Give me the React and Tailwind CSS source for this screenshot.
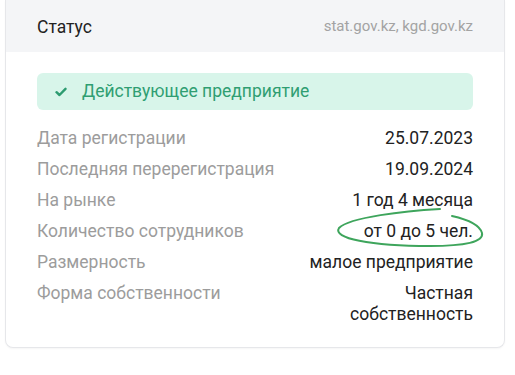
import React from "react";

const rows = [
  ["Дата регистрации", "25.07.2023"],
  ["Последняя перерегистрация", "19.09.2024"],
  ["На рынке", "1 год 4 месяца"],
  ["Количество сотрудников", "от 0 до 5 чел."],
  ["Размерность", "малое предприятие"],
  ["Форма собственности", "Частная собственность"],
];

export default function App() {
  return (
    <div className="w-[515px] h-[375px] bg-white relative overflow-hidden" style={{ fontFamily: "Roboto, 'Noto Sans', sans-serif" }}>
      <div className="ml-[5px] w-[500px] border border-t-0 border-[#e6e7ea] rounded-b-lg bg-white shadow-[0_1px_2px_rgba(0,0,0,0.04)]">
        <div className="h-[52px] bg-[#f4f5f7] flex items-center justify-between pl-[31px] pr-[31px]">
          <span className="text-[17.5px] text-[#222] translate-y-px">Статус</span>
          <span className="text-[15px] text-[#a3a3a3]">stat.gov.kz, kgd.gov.kz</span>
        </div>
        <div className="px-[31px] pt-[21px] pb-[17px]">
          <div className="h-[37px] rounded-md bg-[#d8f5ea] flex items-center pl-[18px]">
            <svg width="12" height="10" viewBox="0 0 12 10" className="mr-[15px]">
              <path d="M1.5 5.2 L4.5 8 L10.5 1.8" fill="none" stroke="#2c9b70" strokeWidth="2.4" strokeLinecap="round" strokeLinejoin="round" />
            </svg>
            <span className="text-[17.5px] text-[#2f9e72]">Действующее предприятие</span>
          </div>
          <div className="mt-[13px] flex flex-col">
            {rows.map(([k, v]) => (
              <div key={k} className="flex justify-between items-start py-[5px] leading-[21px] text-[17.5px]">
                <span className="text-[#9c9c9c]">{k}</span>
                <span className={"text-[#222] text-right " + (k === "Форма собственности" ? "w-[130px]" : "")}>{v}</span>
              </div>
            ))}
          </div>
        </div>
      </div>
      <svg className="absolute left-0 top-0 pointer-events-none" width="515" height="375" viewBox="0 0 515 375">
        <path d="M440 209 C 405 211, 350 217, 339 228 C 332 238, 370 246, 430 246 C 465 246, 484 242, 482 233 C 480 226, 470 220, 452 216" fill="none" stroke="#3ea55c" strokeWidth="2" strokeLinecap="round" />
      </svg>
    </div>
  );
}
